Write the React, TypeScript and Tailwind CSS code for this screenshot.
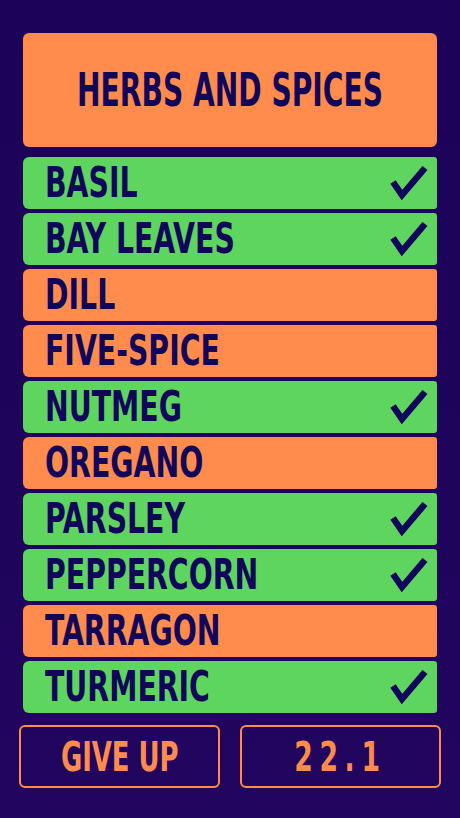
import React from "react";

const ITEMS: { name: string; found: boolean }[] = [
  { name: "BASIL", found: true },
  { name: "BAY LEAVES", found: true },
  { name: "DILL", found: false },
  { name: "FIVE-SPICE", found: false },
  { name: "NUTMEG", found: true },
  { name: "OREGANO", found: false },
  { name: "PARSLEY", found: true },
  { name: "PEPPERCORN", found: true },
  { name: "TARRAGON", found: false },
  { name: "TURMERIC", found: true },
];

const font = "font-['DejaVu_Sans',sans-serif] [font-stretch:condensed] font-bold whitespace-nowrap";

function Check() {
  return (
    <svg viewBox="0 0 38 34" className="h-[34px] w-[38px]">
      <path
        d="M3 16 L12 29 L35 2"
        fill="none"
        stroke="#12065a"
        strokeWidth="6.5"
        strokeLinecap="butt"
        strokeLinejoin="miter"
      />
    </svg>
  );
}

export default function App() {
  return (
    <div className="flex min-h-[818px] w-full flex-col bg-[linear-gradient(180deg,#1c0259_0%,#21055e_100%)] px-[19px] pt-[33px]">
      <div className="mx-[4px] flex h-[114px] items-center justify-center rounded-md bg-[#ff8c4c]">
        <h1 className={`${font} text-[46px] leading-none text-[#12065a] [transform:scaleX(0.68)]`}>
          HERBS AND SPICES
        </h1>
      </div>

      <div className="mx-[4px] mt-[10px] flex flex-col gap-[4px]">
        {ITEMS.map((item) => (
          <div
            key={item.name}
            className={`flex h-[52px] items-center justify-between rounded-l-md rounded-r-[3px] pl-[22px] pr-[9px] ${
              item.found ? "bg-[#5dd55f]" : "bg-[#ff8c4c]"
            }`}
          >
            <span
              className={`${font} origin-left text-[42px] leading-none text-[#12065a] [transform:scaleX(0.75)]`}
            >
              {item.name}
            </span>
            {item.found ? <Check /> : null}
          </div>
        ))}
      </div>

      <div className="mt-[12px] grid grid-cols-2 gap-[20px]">
        <button
          type="button"
          className="flex h-[63px] items-center justify-center rounded-md border-2 border-[#ff8c4c] bg-transparent"
        >
          <span className={`${font} text-[40px] leading-none text-[#ff8c4c] [transform:scaleX(0.72)]`}>
            GIVE UP
          </span>
        </button>
        <div className="flex h-[63px] items-center justify-center rounded-md border-2 border-[#ff8c4c]">
          <span className={`${font} text-[40px] leading-none tracking-[9px] text-[#ff8c4c] [transform:scaleX(0.74)]`}>
            22.1
          </span>
        </div>
      </div>
    </div>
  );
}
